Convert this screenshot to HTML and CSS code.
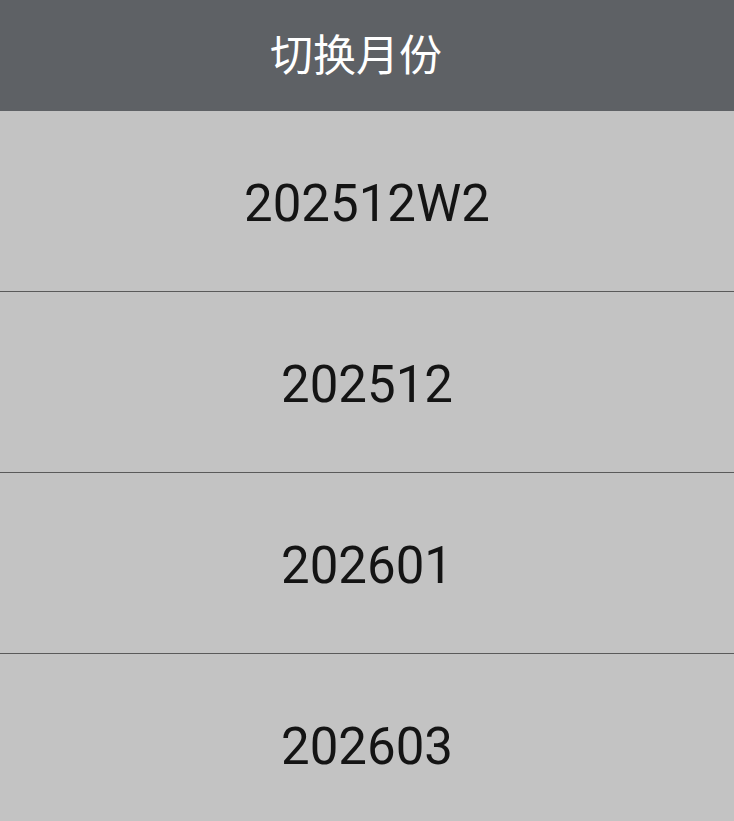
FILE: index.html
```html
<!DOCTYPE html>
<html lang="zh">
<head>
<meta charset="utf-8">
<title>切换月份</title>
<link rel="stylesheet" href="styles.css">
</head>
<body>
<div class="page">
  <header class="header">切换月份</header>
  <ul class="list">
    <li class="item">202512W2</li>
    <li class="item">202512</li>
    <li class="item">202601</li>
    <li class="item">202603</li>
  </ul>
</div>
</body>
</html>
```
FILE: styles.css
```css
html, body {
  margin: 0;
  padding: 0;
  background: #c3c3c3;
}
.page {
  width: 734px;
  height: 821px;
  overflow: hidden;
  font-family: Roboto, "Noto Sans CJK SC", sans-serif;
}
.header {
  height: 111px;
  background: #5e6165;
  color: #ffffff;
  font-family: "Noto Sans CJK SC", sans-serif;
  font-size: 43px;
  display: flex;
  align-items: center;
  justify-content: center;
  padding: 0 22px 8px 0;
  box-sizing: border-box;
}
.list {
  list-style: none;
  margin: 0;
  padding: 0;
}
.item {
  height: 181px;
  box-sizing: border-box;
  padding-top: 4px;
  border-bottom: 1px solid #5a5a5a;
  background: #c3c3c3;
  color: #141414;
  font-size: 51px;
  display: flex;
  align-items: center;
  justify-content: center;
}
```
